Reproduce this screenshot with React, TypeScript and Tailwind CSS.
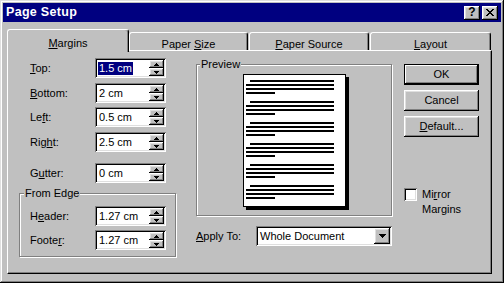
import React from 'react';

// Win95-ish bevels
const raised =
  'shadow-[inset_-1px_-1px_0_#000,inset_1px_1px_0_#fff,inset_-2px_-2px_0_#808080,inset_2px_2px_0_#dfdfdf]';
const sunken =
  'shadow-[inset_1px_1px_0_#808080,inset_-1px_-1px_0_#fff,inset_2px_2px_0_#000,inset_-2px_-2px_0_#dfdfdf]';
const etched = 'border border-[#808080] shadow-[1px_1px_0_#fff,inset_1px_1px_0_#fff]';

const Arrow = ({ up }: { up?: boolean }) => (
  <svg width="5" height="3" shapeRendering="crispEdges" className="block">
    {up ? (
      <>
        <rect x="2" y="0" width="1" height="1" />
        <rect x="1" y="1" width="3" height="1" />
        <rect x="0" y="2" width="5" height="1" />
      </>
    ) : (
      <>
        <rect x="0" y="0" width="5" height="1" />
        <rect x="1" y="1" width="3" height="1" />
        <rect x="2" y="2" width="1" height="1" />
      </>
    )}
  </svg>
);

const SpinBtn = ({ up }: { up?: boolean }) => (
  <div className={`flex-1 flex items-center justify-center bg-[#c0c0c0] ${raised}`}>
    <Arrow up={up} />
  </div>
);

const Spin = ({ value, selected }: { value: string; selected?: boolean }) => (
  <div className={`flex w-[71px] h-[20px] bg-white p-[2px] ${sunken}`}>
    <div className="flex-1 flex items-center pl-[1px] leading-none">
      <span className={selected ? 'bg-[#000080] text-white px-[1px] py-[1px]' : 'px-[1px]'}>{value}</span>
    </div>
    <div className="flex flex-col w-[15px]">
      <SpinBtn up />
      <SpinBtn />
    </div>
  </div>
);

const Row = ({ label, u, value, selected, className = '' }: { label: string; u: number; value: string; selected?: boolean; className?: string }) => (
  <div className={`flex items-center h-[20px] ${className}`}>
    <span className="w-[65px]">
      {label.slice(0, u)}
      <span className="underline underline-offset-[1px]">{label[u]}</span>
      {label.slice(u + 1)}
    </span>
    <Spin value={value} selected={selected} />
  </div>
);

const Tab = ({ children, w, selected, className = '' }: { children: React.ReactNode; w: string; selected?: boolean; className?: string }) => (
  <div
    className={`${w} ${className} flex justify-center border-l border-t border-r border-l-white border-t-white border-r-black rounded-t-[3px] shadow-[inset_-1px_0_0_#808080] bg-[#c0c0c0] ${
      selected ? 'h-[23px] -mb-[2px] relative z-10 pt-[7px]' : 'h-[18px] pt-[5px]'
    }`}
  >
    <span className="leading-[13px]">{children}</span>
  </div>
);

const Btn = ({ children, def }: { children: React.ReactNode; def?: boolean }) => (
  <div
    className={`w-[75px] flex items-center justify-center bg-[#c0c0c0] ${
      def
        ? 'h-[21px] border border-black shadow-[inset_-1px_-1px_0_#000,inset_1px_1px_0_#fff,inset_-2px_-2px_0_#808080]'
        : `h-[21px] ${raised}`
    }`}
  >
    {children}
  </div>
);

const lineGroups = [0, 1, 2, 3, 4, 5];

export default function App() {
  return (
    <div
      className="w-[504px] h-[283px] bg-[#c0c0c0] p-[3px] flex flex-col text-[11px] text-black shadow-[inset_-1px_-1px_0_#000,inset_1px_1px_0_#dfdfdf,inset_-2px_-2px_0_#808080,inset_2px_2px_0_#fff]"
      style={{ fontFamily: '"Liberation Sans", Arial, sans-serif' }}
    >
      {/* title bar */}
      <div className="h-[19px] shrink-0 bg-[#000080] flex items-center pl-[3px] pr-[3px]">
        <span className="flex-1 text-white font-bold text-[12.5px] tracking-[0.3px]">Page Setup</span>
        <div className={`w-[16px] h-[14px] flex items-center justify-center bg-[#c0c0c0] text-black font-bold text-[12px] leading-none pb-[1px] ${raised}`}>?</div>
        <div className={`ml-[2px] w-[16px] h-[14px] flex items-center justify-center bg-[#c0c0c0] ${raised}`}>
          <svg width="8" height="7" shapeRendering="crispEdges" className="block">
            <path d="M0 0h2v1h1v1h2V1h1V0h2v1H7v1H6v1H5v1h1v1h1v1h1v1H6V6H5V5H3v1H2v1H0V6h1V5h1V4h1V3H2V2H1V1H0z" />
          </svg>
        </div>
      </div>

      {/* tabs */}
      <div className="mt-[7px] ml-[4px] flex items-end h-[21px] shrink-0">
        <Tab w="w-[122px]" selected>
          <span className="underline underline-offset-[1px]">M</span>argins
        </Tab>
        <Tab w="w-[119px]">
          Paper <span className="underline underline-offset-[1px]">S</span>ize
        </Tab>
        <Tab w="w-[120px]" className="ml-[1px]">
          <span className="underline underline-offset-[1px]">P</span>aper Source
        </Tab>
        <Tab w="w-[121px]" className="ml-[1px]">
          <span className="underline underline-offset-[1px]">L</span>ayout
        </Tab>
      </div>

      {/* panel */}
      <div className="ml-[4px] w-[485px] h-[224px] shrink-0 border border-t-white border-l-white border-r-black border-b-black shadow-[inset_-1px_-1px_0_#808080] flex pt-[7px] pl-[11px]">
        {/* left column */}
        <div className="w-[157px] flex flex-col">
          <div className="pl-[11px] flex flex-col">
            <Row label="Top:" u={0} value="1.5 cm" selected />
            <Row label="Bottom:" u={0} value="2 cm" className="mt-[5px]" />
            <Row label="Left:" u={2} value="0.5 cm" className="mt-[4px]" />
            <Row label="Right:" u={3} value="2.5 cm" className="mt-[5px]" />
            <Row label="Gutter:" u={1} value="0 cm" className="mt-[11px]" />
          </div>
          <div className={`relative mt-[10px] h-[64px] ${etched} pt-[12px] pl-[10px]`}>
            <span className="absolute -top-[7px] left-[4px] bg-[#c0c0c0] px-[1px] leading-[13px]">From Edge</span>
            <Row label="Header:" u={1} value="1.27 cm" />
            <Row label="Footer:" u={5} value="1.27 cm" className="mt-[4px]" />
          </div>
        </div>

        {/* preview column */}
        <div className="ml-[20px] w-[196px] flex flex-col">
          <div className={`relative mt-[6px] h-[152px] ${etched} flex pl-[46px] pt-[9px]`}>
            <span className="absolute -top-[7px] left-[3px] bg-[#c0c0c0] px-[1px] leading-[13px]">Preview</span>
            <div className="w-[103px] h-[133px] bg-white border border-black shadow-[3px_3px_0_#000] flex flex-col pl-[2px] pr-[11px] pt-[5px] gap-[7px]">
              {lineGroups.map((g) => (
                <div key={g} className="flex flex-col gap-[2px]">
                  <div className="h-[2px] bg-black ml-[4px]" />
                  <div className="h-[2px] bg-black" />
                  <div className="h-[2px] bg-black" />
                  <div className="h-[2px] bg-black w-[29px]" />
                </div>
              ))}
            </div>
          </div>
          <div className="mt-[10px] flex items-center h-[20px]">
            <span className="w-[60px]">
              <span className="underline underline-offset-[1px]">A</span>pply To:
            </span>
            <div className={`w-[136px] h-[20px] bg-white p-[2px] flex ${sunken}`}>
              <span className="flex-1 flex items-center pl-[2px]">Whole Document</span>
              <div className={`w-[16px] flex items-center justify-center bg-[#c0c0c0] ${raised}`}>
                <svg width="7" height="4" shapeRendering="crispEdges" className="block">
                  <path d="M0 0h7v1H0zM1 1h5v1H1zM2 2h3v1H2zM3 3h1v1H3z" />
                </svg>
              </div>
            </div>
          </div>
        </div>

        {/* buttons column */}
        <div className="ml-[12px] flex flex-col">
          <div className="mt-[6px] flex flex-col gap-[5px]">
            <Btn def>OK</Btn>
            <Btn>Cancel</Btn>
            <Btn>
              <span>
                <span className="underline underline-offset-[1px]">D</span>efault...
              </span>
            </Btn>
          </div>
          <div className="mt-[50px] flex items-start">
            <div className={`w-[13px] h-[13px] bg-white mt-[1px] ${sunken}`} />
            <div className="ml-[5px] leading-[15px]">
              Mi<span className="underline underline-offset-[1px]">r</span>ror
              <br />
              Margins
            </div>
          </div>
        </div>
      </div>
    </div>
  );
}
